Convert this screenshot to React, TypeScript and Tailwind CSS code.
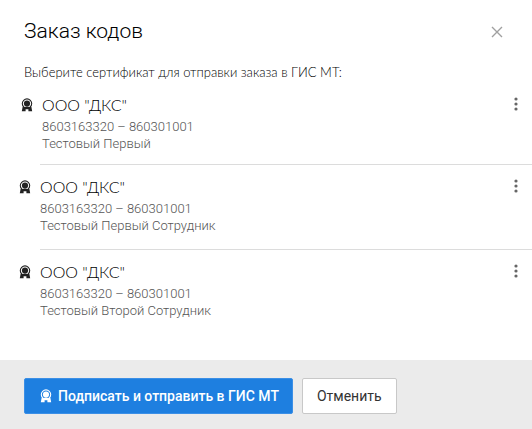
import { clsx } from "clsx";

type Certificate = {
  id: number;
  company: string;
  codes: string;
  owner: string;
};

const certificates: Certificate[] = [
  { id: 1, company: 'ООО "ДКС"', codes: "8603163320 – 860301001", owner: "Тестовый Первый" },
  { id: 2, company: 'ООО "ДКС"', codes: "8603163320 – 860301001", owner: "Тестовый Первый Сотрудник" },
  { id: 3, company: 'ООО "ДКС"', codes: "8603163320 – 860301001", owner: "Тестовый Второй Сотрудник" },
];

function BadgeIcon({ className }: { className?: string }) {
  return (
    <svg viewBox="0 0 12 14" className={clsx("h-3.5 w-3 shrink-0", className)} aria-hidden="true">
      <path d="M1.6 9 .8 13.2h3.8v-2h2.8v2h3.8L10.4 9Z" fill="currentColor" />
      <circle cx="6" cy="5.6" r="4.7" fill="none" stroke="currentColor" strokeWidth="1.1" />
      <circle cx="6" cy="5.6" r="3.1" fill="currentColor" />
    </svg>
  );
}

function CertificateRow({ certificate, selected }: { certificate: Certificate; selected: boolean }) {
  return (
    <li className={clsx("flex text-[#222222]", selected ? "pl-[21px]" : "pl-[19px]")}>
      <BadgeIcon className={selected ? "mt-3.5" : "mt-[15px]"} />
      <div
        className={clsx(
          "flex flex-1 justify-between",
          selected ? "ml-[7px] pt-2.5 pb-3 pl-0.5" : "ml-[9px] pt-[11px] pb-[15px]",
          certificate.id < certificates.length && "border-b border-[#dcdcdc]",
        )}
      >
        <div>
          <h2 className="mb-0.5 font-['Lato','Liberation_Sans',sans-serif] text-base leading-[22px] font-light text-black">
            {certificate.company}
          </h2>
          <p className="text-[13px] leading-[17px] font-light text-[#555555]">{certificate.codes}</p>
          <p className="text-[13px] leading-[17px] font-light text-[#555555]">{certificate.owner}</p>
        </div>
        <button type="button" aria-label="Действия" className="flex h-5 w-8 items-center justify-center">
          <svg viewBox="0 0 4 14" className="h-3.5 w-1 text-[#666666]" fill="currentColor">
            <circle cx="2" cy="2" r="1.6" />
            <circle cx="2" cy="7" r="1.6" />
            <circle cx="2" cy="12" r="1.6" />
          </svg>
        </button>
      </div>
    </li>
  );
}

export default function App() {
  return (
    <div
      role="dialog"
      aria-labelledby="dialog-title"
      className="bg-white font-['Roboto','Liberation_Sans',sans-serif] text-[#333333]"
    >
      <header className="flex items-end justify-between pt-[15px] pr-[29px] pl-6">
        <h1 id="dialog-title" className="text-[21px] leading-8 font-light text-black">
          Заказ кодов
        </h1>
        <button type="button" aria-label="Закрыть" className="flex h-[30px] w-6 items-center justify-end">
          <svg viewBox="0 0 12 12" className="size-3 text-[#a0a0a0]" fill="none" stroke="currentColor" strokeWidth="1.4">
            <path d="m1 1 10 10M11 1 1 11" />
          </svg>
        </button>
      </header>
      <p className="mt-[17px] px-6 font-['Lato','Liberation_Sans',sans-serif] text-[13px] leading-[17px] font-light text-black">
        Выберите сертификат для отправки заказа в ГИС МТ:
      </p>
      <ul className="mt-[3px]">
        {certificates.map((certificate) => (
          <CertificateRow key={certificate.id} certificate={certificate} selected={certificate.id === 1} />
        ))}
      </ul>
      <footer className="mt-[26px] flex gap-[9px] bg-[#ebebeb] px-6 pt-[18px] pb-[15px]">
        <button
          type="button"
          className="flex h-9 items-center gap-1.5 rounded-xs border border-[#3b8fe6] bg-[#1e7fe0] pr-[13px] pl-[15px] text-sm font-medium text-white"
        >
          <BadgeIcon />
          Подписать и отправить в ГИС МТ
        </button>
        <button type="button" className="h-9 rounded-xs border border-[#c8c8c8] bg-white px-3.5 text-sm">
          Отменить
        </button>
      </footer>
    </div>
  );
}
